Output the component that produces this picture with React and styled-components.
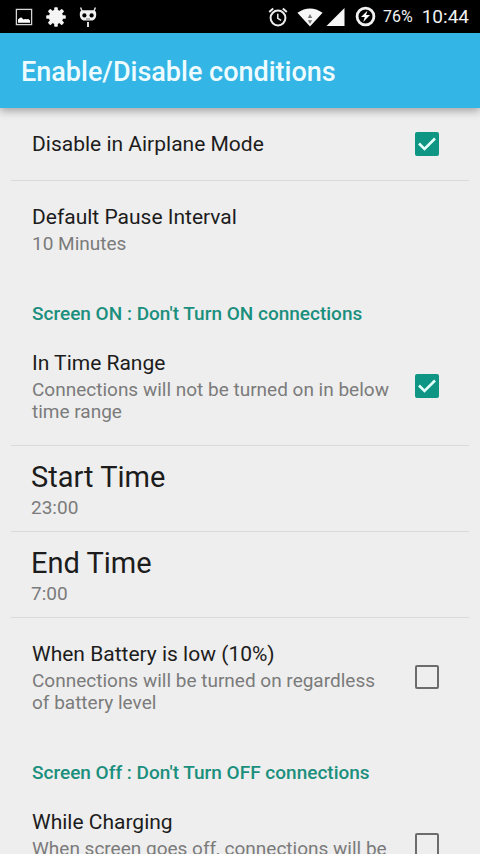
import React, { useState } from "react";
import styled, { createGlobalStyle } from "styled-components";

const GlobalStyle = createGlobalStyle`
  * { box-sizing: border-box; }
  body {
    margin: 0;
    background: #eeeeee;
    font-family: Roboto, "Noto Sans", sans-serif;
  }
`;

const Screen = styled.div`
  display: flex;
  flex-direction: column;
  height: 100vh;
  overflow: hidden;
  background: #eeeeee;
`;

const StatusBar = styled.div`
  display: flex;
  flex: none;
  align-items: center;
  justify-content: space-between;
  height: 33px;
  padding: 0 11px 0 14px;
  background: #000;
  color: #f2f2f2;
`;

const StatusGroup = styled.div`
  display: flex;
  align-items: center;
  gap: ${(p) => p.$gap}px;
  svg { display: block; }
`;

const Reception = styled(StatusGroup)`
  margin: 0 7px 0 6px;
`;

const Battery = styled.span`
  margin-left: 4px;
  font-size: 16px;
  line-height: 24px;
`;

const Clock = styled.time`
  margin-left: 6px;
  font-size: 19px;
  line-height: 24px;
`;

const AppBar = styled.header`
  z-index: 1;
  flex: none;
  padding: 23px 21px 20px;
  background: #33b5e5;
  box-shadow: 0 3px 8px rgba(0, 0, 0, 0.32);
`;

const Heading = styled.h1`
  margin: 0;
  color: #effcff;
  font-size: 27px;
  font-weight: 500;
  line-height: 32px;
`;

const Settings = styled.main`
  flex: 1;
  min-height: 0;
  padding: 0 11px;
  overflow-y: auto;
  scrollbar-width: none;
`;

const Divider = styled.hr`
  height: 1px;
  margin: 0;
  border: 0;
  background: #dadada;
`;

const Category = styled.h2`
  margin: 0;
  padding: 25px 21px 1px;
  color: #1b8f7d;
  font-size: 19px;
  font-weight: 500;
  line-height: 24px;
`;

const CheckRow = styled.label`
  display: flex;
  align-items: center;
  justify-content: space-between;
  gap: 24px;
  padding: 22px 30px 22px 21px;
  cursor: pointer;
`;

const ButtonRow = styled.button`
  display: block;
  width: 100%;
  padding: ${(p) => (p.$large ? "11px 20px 12px" : "22px 21px")};
  border: 0;
  background: none;
  font-family: inherit;
  text-align: left;
  cursor: pointer;
`;

const Title = styled.span`
  display: block;
  color: #1c1c1c;
  font-size: ${(p) => (p.$large ? 29 : 21)}px;
  line-height: ${(p) => (p.$large ? 40 : 28)}px;
`;

const Summary = styled.span`
  display: block;
  margin-top: ${(p) => (p.$tight ? 0 : 2)}px;
  color: #7b7b7b;
  font-size: 19px;
  line-height: 22px;
`;

const CheckBox = styled.span`
  display: grid;
  flex: none;
  width: 24px;
  height: 24px;
  > * { grid-area: 1 / 1; }
  svg { pointer-events: none; }
`;

const CheckInput = styled.input`
  appearance: none;
  width: 24px;
  height: 24px;
  margin: 0;
  border: 2px solid #6c6c6c;
  border-radius: 2px;
  cursor: pointer;
  &:checked {
    border-color: #0f9583;
    background: #0f9583;
  }
`;

function CheckPreference({ title, summary, initial = false }) {
  const [checked, setChecked] = useState(initial);
  return (
    <CheckRow>
      <span>
        <Title>{title}</Title>
        {summary && <Summary>{summary}</Summary>}
      </span>
      <CheckBox>
        <CheckInput
          type="checkbox"
          checked={checked}
          onChange={(e) => setChecked(e.target.checked)}
        />
        {checked && (
          <svg width="24" height="24" viewBox="0 0 24 24" aria-hidden="true">
            <path d="M4 11.5 9.5 17 20 6.5" fill="none" stroke="#e2fffb" strokeWidth="2.6" />
          </svg>
        )}
      </CheckBox>
    </CheckRow>
  );
}

function ValuePreference({ title, value, large = false }) {
  return (
    <ButtonRow type="button" $large={large}>
      <Title $large={large}>{title}</Title>
      <Summary $tight={large}>{value}</Summary>
    </ButtonRow>
  );
}

const PictureIcon = () => (
  <svg width="20" height="20" viewBox="0 0 20 20" aria-hidden="true">
    <rect x="2.4" y="2.4" width="15.2" height="15.2" fill="none" stroke="#d5d5d5" strokeWidth="1.3" />
    <path d="M4 15.8V12.4l2-1.6 1.6-.4 1.8 2 1.8-.4 1.6.3 1.5-.2 1.7 1.5v2.2z" fill="#fff" />
  </svg>
);

const GEAR_ANGLES = [0, 45, 90, 135];

const GearIcon = () => (
  <svg width="20" height="20" viewBox="0 0 20 20" fill="#f5f5f5" aria-hidden="true">
    <circle cx="10" cy="10" r="7.2" />
    {GEAR_ANGLES.map((a) => (
      <rect key={a} x="8.2" y="0.2" width="3.6" height="19.6" rx="0.8" transform={`rotate(${a} 10 10)`} />
    ))}
  </svg>
);

const RobotIcon = () => (
  <svg width="20" height="22" viewBox="0 0 20 22" aria-hidden="true">
    <path d="M2.6 1.4 4 5M17.4 1.4 16 5" stroke="#ddd" strokeWidth="1.5" />
    <path d="M4 4.2H16Q18.4 4.6 18.2 9 18 13.4 14.4 14.6H5.6Q2 13.4 1.8 9 1.6 4.6 4 4.2z" fill="#f2f2f2" />
    <circle cx="6.4" cy="9.4" r="2.1" fill="#000" />
    <circle cx="13.6" cy="9.4" r="2.1" fill="#000" />
    <path d="M8 13h4" stroke="#777" />
    <path d="M10 16v5" stroke="#ddd" strokeWidth="2" />
  </svg>
);

const AlarmIcon = () => (
  <svg width="20" height="20" viewBox="0 0 20 20" fill="none" stroke="#ededed" aria-hidden="true">
    <circle cx="10" cy="11" r="7.4" strokeWidth="2" />
    <path d="M1.2 5 5.2 1.6M18.8 5 14.8 1.6" strokeWidth="2" />
    <path d="M9.8 6.8v4.6l3.3 2" strokeWidth="1.5" />
  </svg>
);

const WifiIcon = () => (
  <svg width="26" height="20" viewBox="0 0 26 20" aria-hidden="true">
    <path d="M0.4 5.8Q13-3 25.6 5.8L13 19.6z" fill="#f7f7f7" />
    <path d="m13 7 2.2 4h-4.4zM13 17l-2.2-3.8h4.4z" fill="#777" />
  </svg>
);

const SignalIcon = () => (
  <svg width="19" height="20" viewBox="0 0 19 20" aria-hidden="true">
    <path d="M18.5 1v18H.5z" fill="#f7f7f7" />
  </svg>
);

const ChargeIcon = () => (
  <svg width="21" height="21" viewBox="0 0 21 21" aria-hidden="true">
    <circle cx="10.5" cy="10.5" r="8.4" fill="none" stroke="#f2f2f2" strokeWidth="2.8" />
    <path d="m12.4 4.8-6.4 6.2h3.8l-1.6 4.9 6.8-6.8h-3.9z" fill="#fff" />
  </svg>
);

export default function App() {
  return (
    <>
      <GlobalStyle />
      <Screen>
        <StatusBar>
          <StatusGroup $gap={12}>
            <PictureIcon />
            <GearIcon />
            <RobotIcon />
          </StatusGroup>
          <StatusGroup $gap={3}>
            <AlarmIcon />
            <Reception $gap={3}>
              <WifiIcon />
              <SignalIcon />
            </Reception>
            <ChargeIcon />
            <Battery>76%</Battery>
            <Clock>10:44</Clock>
          </StatusGroup>
        </StatusBar>
        <AppBar>
          <Heading>Enable/Disable conditions</Heading>
        </AppBar>
        <Settings>
          <CheckPreference title="Disable in Airplane Mode" initial />
          <Divider />
          <ValuePreference title="Default Pause Interval" value="10 Minutes" />
          <Category>Screen ON : Don't Turn ON connections</Category>
          <CheckPreference
            title="In Time Range"
            summary="Connections will not be turned on in below time range"
            initial
          />
          <Divider />
          <ValuePreference title="Start Time" value="23:00" large />
          <Divider />
          <ValuePreference title="End Time" value="7:00" large />
          <Divider />
          <CheckPreference
            title="When Battery is low (10%)"
            summary="Connections will be turned on regardless of battery level"
          />
          <Category>Screen Off : Don't Turn OFF connections</Category>
          <CheckPreference
            title="While Charging"
            summary="When screen goes off, connections will be kept on while charging"
          />
        </Settings>
      </Screen>
    </>
  );
}
